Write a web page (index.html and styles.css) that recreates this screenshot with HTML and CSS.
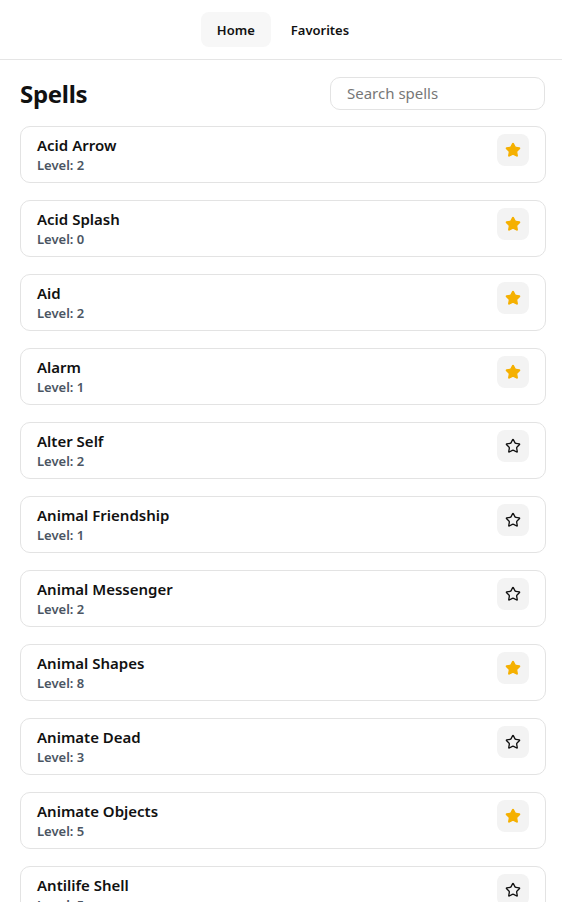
FILE: index.html
```html
<!DOCTYPE html>
<html>
<head>
<meta charset="utf-8">
<link rel="stylesheet" href="styles.css">
</head>
<body>
<nav class="nav">
  <a class="nav-link active">Home</a>
  <a class="nav-link">Favorites</a>
</nav>
<main class="main">
  <div class="header">
    <h1 class="title">Spells</h1>
    <input class="search" type="text" placeholder="Search spells">
  </div>
  <ul class="list" id="list"></ul>
</main>
<script src="app.js"></script>
</body>
</html>
```
FILE: app.js
```js
const spells = [
  ["Acid Arrow", 2, true],
  ["Acid Splash", 0, true],
  ["Aid", 2, true],
  ["Alarm", 1, true],
  ["Alter Self", 2, false],
  ["Animal Friendship", 1, false],
  ["Animal Messenger", 2, false],
  ["Animal Shapes", 8, true],
  ["Animate Dead", 3, false],
  ["Animate Objects", 5, true],
  ["Antilife Shell", 5, false],
  ["Antimagic Field", 8, false]
];
const starPath = "M11.525 2.295a.53.53 0 0 1 .95 0l2.31 4.679a2.123 2.123 0 0 0 1.595 1.16l5.166.756a.53.53 0 0 1 .294.904l-3.736 3.638a2.123 2.123 0 0 0-.611 1.878l.882 5.14a.53.53 0 0 1-.771.56l-4.618-2.428a2.122 2.122 0 0 0-1.973 0L6.396 21.01a.53.53 0 0 1-.77-.56l.881-5.139a2.122 2.122 0 0 0-.611-1.879L2.16 9.795a.53.53 0 0 1 .294-.906l5.165-.755a2.122 2.122 0 0 0 1.597-1.16z";
const list = document.getElementById("list");
list.innerHTML = spells.map(([name, lvl, fav]) => `
  <li class="card">
    <div class="info">
      <div class="name">${name}</div>
      <div class="level">Level: ${lvl}</div>
    </div>
    <button class="fav${fav ? " on" : ""}">
      <svg viewBox="0 0 24 24" width="16" height="16"><path d="${starPath}"/></svg>
    </button>
  </li>`).join("");
```
FILE: styles.css
```css
* { box-sizing: border-box; }
html, body { margin: 0; padding: 0; background: #fff; }
body {
  font-family: "Noto Sans", "Open Sans", sans-serif;
  color: #111;
  overflow: hidden;
}
.nav {
  height: 60px;
  border-bottom: 1px solid #e5e5e5;
  display: flex;
  justify-content: center;
  align-items: center;
  gap: 4px;
  padding-left: 4px;
}
.nav-link {
  font-size: 13px;
  font-weight: 600;
  padding: 8px 16px;
  height: 35px;
  display: flex;
  align-items: center;
  border-radius: 8px;
  color: #111;
}
.nav-link.active { background: #f7f7f7; }
.main { padding: 16px 16px 0 20px; width: 562px; }
.header {
  display: flex;
  justify-content: space-between;
  align-items: center;
  height: 34px;
  margin-bottom: 16px;
}
.title {
  margin: 0;
  font-size: 24px;
  font-weight: 700;
  letter-spacing: -0.3px;
}
.search {
  width: 215px;
  height: 33px;
  border: 1px solid #e3e3e3;
  border-radius: 10px;
  padding: 0 16px;
  font-family: inherit;
  font-size: 15px;
  color: #111;
  outline: none;
  margin-right: 1px;
}
.search::placeholder { color: #777; }
.list {
  list-style: none;
  margin: 0;
  padding: 0;
  width: 526px;
  display: flex;
  flex-direction: column;
  gap: 17px;
}
.card {
  border: 1px solid #e3e3e3;
  border-radius: 10px;
  padding: 7px 16px 8px;
  display: flex;
  justify-content: space-between;
  align-items: flex-start;
  height: 57px;
  flex-shrink: 0;
}
.info { padding-top: 1px; }
.name { font-size: 15px; font-weight: 600; line-height: 20px; }
.level { font-size: 13px; font-weight: 600; line-height: 18px; margin-top: 1px; color: #4b5563; }
.fav {
  width: 32px;
  height: 32px;
  border: none;
  border-radius: 8px;
  background: #f3f3f3;
  display: flex;
  align-items: center;
  justify-content: center;
  padding: 0;
}
.fav svg { fill: none; stroke: #111; stroke-width: 2; stroke-linejoin: round; }
.fav.on svg { fill: #f5b000; stroke: #f5b000; }
```
